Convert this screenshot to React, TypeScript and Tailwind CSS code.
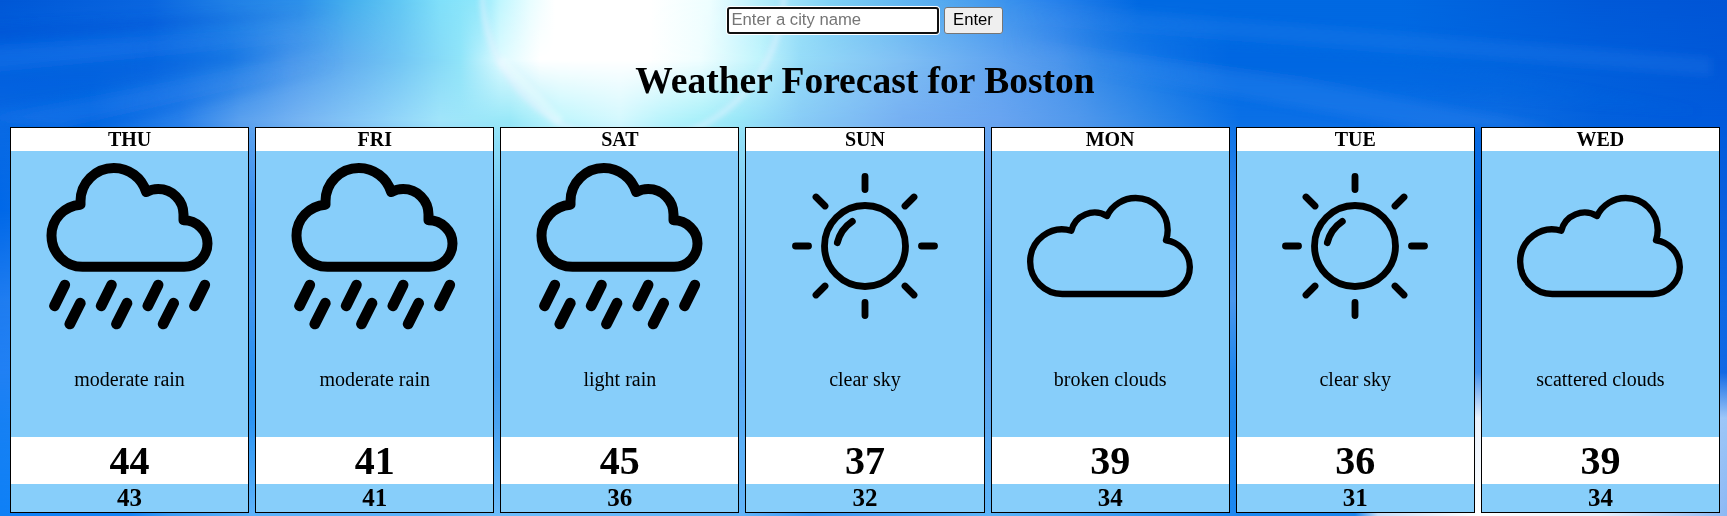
type Weather = 'rain' | 'sun' | 'cloud';

interface Day {
  name: string;
  icon: Weather;
  text: string;
  high: number;
  low: number;
}

const days: Day[] = [
  { name: 'THU', icon: 'rain', text: 'moderate rain', high: 44, low: 43 },
  { name: 'FRI', icon: 'rain', text: 'moderate rain', high: 41, low: 41 },
  { name: 'SAT', icon: 'rain', text: 'light rain', high: 45, low: 36 },
  { name: 'SUN', icon: 'sun', text: 'clear sky', high: 37, low: 32 },
  { name: 'MON', icon: 'cloud', text: 'broken clouds', high: 39, low: 34 },
  { name: 'TUE', icon: 'sun', text: 'clear sky', high: 36, low: 31 },
  { name: 'WED', icon: 'cloud', text: 'scattered clouds', high: 39, low: 34 },
];

// Horizontal colour bands of the sky; each fades into the next one below it.
const bands: { y: number; stops: [number, string][] }[] = [
  {
    y: 0,
    stops: [
      [0, '#0057d6'], [150, '#0a66e0'], [230, '#2080e6'], [300, '#2c90ea'], [350, '#45b0ee'], [400, '#62c8f4'],
      [440, '#80e0fa'], [480, '#90e8fb'], [500, '#c0f6fe'], [530, '#e8fdff'], [555, '#ffffff'], [650, '#ffffff'],
      [710, '#eefeff'], [760, '#b8f0fc'], [830, '#80d2f6'], [900, '#62b8f2'], [970, '#4aa0ee'], [1050, '#2a84ec'],
      [1100, '#1474e6'], [1140, '#0069e2'], [1400, '#0069e2'], [1600, '#0059d8'], [1727, '#0055d6'],
    ],
  },
  {
    y: 60,
    stops: [
      [0, '#0062e0'], [150, '#0768e2'], [230, '#1c7ce6'], [290, '#4a98ec'], [350, '#62b0f0'], [400, '#72c6f4'],
      [460, '#90e4f9'], [500, '#dcfaff'], [540, '#ffffff'], [650, '#ffffff'], [700, '#f0feff'], [760, '#c0f4fc'],
      [800, '#96dcf8'], [900, '#80c0f4'], [1000, '#60a4f0'], [1060, '#4c96ec'], [1100, '#3088e8'], [1160, '#1478e8'],
      [1230, '#0069e2'], [1400, '#0069e2'], [1727, '#0058d8'],
    ],
  },
  {
    y: 120,
    stops: [
      [0, '#0a6ae4'], [90, '#0268e2'], [180, '#2880ea'], [240, '#5aa0ee'], [300, '#76b4f2'], [380, '#8ccff8'],
      [440, '#a0e4fa'], [510, '#98e8f8'], [560, '#c0f6fd'], [620, '#d4f8fe'], [660, '#baf4fc'], [700, '#a8f0fa'],
      [740, '#98e6f8'], [800, '#88ccf6'], [900, '#76b0f2'], [1000, '#68a4f0'], [1080, '#5098ec'], [1150, '#3088e8'],
      [1240, '#0a70e6'], [1400, '#0a6ee6'], [1500, '#0c6ce2'], [1600, '#0260dc'], [1727, '#005adc'],
    ],
  },
  {
    y: 210,
    stops: [
      [0, '#0068e8'], [252, '#3a90ee'], [497, '#6cc4f6'], [742, '#7cc8f6'], [988, '#5aa0f0'], [1233, '#3088ec'],
      [1478, '#0066e2'], [1727, '#0860de'],
    ],
  },
  {
    y: 300,
    stops: [
      [0, '#1e7cf0'], [252, '#4296ee'], [497, '#50a4f0'], [742, '#66aef4'], [988, '#3c90ee'], [1233, '#4a98ee'],
      [1478, '#2478e8'], [1727, '#0c68e4'],
    ],
  },
  {
    y: 372,
    stops: [
      [0, '#2080f4'], [252, '#2a90f0'], [497, '#3f9aee'], [742, '#5aa8f4'], [988, '#5aa0f0'], [1233, '#2086ec'],
      [1478, '#4492ee'], [1727, '#1068e4'],
    ],
  },
  {
    y: 418,
    stops: [
      [0, '#1680f4'], [252, '#2c94f2'], [497, '#48a2f0'], [742, '#5aaef6'], [988, '#5aa8f0'], [1233, '#1a84ec'],
      [1400, '#1a84ec'], [1478, '#ecf3fd'], [1727, '#9cc6f8'],
    ],
  },
  {
    y: 510,
    stops: [
      [0, '#0f80f6'], [130, '#1484f6'], [170, '#3c9cf4'], [252, '#5cb2fa'], [430, '#5cb2fa'], [497, '#6cbcfa'],
      [742, '#62b4f8'], [810, '#3c98f4'], [988, '#5cb4f8'], [1233, '#1c88f0'], [1355, '#1a86ee'], [1378, '#c8e0fa'],
      [1478, '#ffffff'], [1600, '#e8f2fd'], [1727, '#8cb8f4'],
    ],
  },
];

function Sky() {
  return (
    <svg className="absolute inset-0 h-[516px] w-full" viewBox="0 0 1727 516" preserveAspectRatio="none" aria-hidden="true">
      <defs>
        {bands.map((band, i) => (
          <linearGradient key={band.y} id={`band${i}`} gradientUnits="userSpaceOnUse" x1="0" x2="1727" y1="0" y2="0">
            {band.stops.map(([x, color]) => (
              <stop key={x} offset={x / 1727} stopColor={color} />
            ))}
          </linearGradient>
        ))}
        {bands.slice(1).map((band, i) => (
          <linearGradient key={band.y} id={`fade${i + 1}`} gradientUnits="userSpaceOnUse" x1="0" x2="0" y1={bands[i].y} y2={band.y}>
            <stop offset="0" stopColor="#fff" stopOpacity="0" />
            <stop offset="1" stopColor="#fff" stopOpacity="1" />
          </linearGradient>
        ))}
        {bands.slice(1).map((band, i) => (
          <mask key={band.y} id={`mask${i + 1}`} maskUnits="userSpaceOnUse" x="0" y="0" width="1727" height="516">
            <rect width="1727" height="516" fill={`url(#fade${i + 1})`} />
          </mask>
        ))}
        <linearGradient id="rayFade" gradientUnits="userSpaceOnUse" x1="0" x2="1727" y1="0" y2="0">
          <stop offset="0" stopColor="#fff" />
          <stop offset=".07" stopColor="#fff" />
          <stop offset=".2" stopColor="#fff" stopOpacity="0" />
          <stop offset=".58" stopColor="#fff" stopOpacity="0" />
          <stop offset=".7" stopColor="#fff" />
          <stop offset="1" stopColor="#fff" />
        </linearGradient>
        <mask id="rayMask" maskUnits="userSpaceOnUse" x="0" y="0" width="1727" height="516">
          <rect width="1727" height="516" fill="url(#rayFade)" />
        </mask>
        <filter id="soft" x="-20%" y="-50%" width="140%" height="200%">
          <feGaussianBlur stdDeviation="4" />
        </filter>
        <filter id="halo" x="-20%" y="-20%" width="140%" height="140%">
          <feGaussianBlur stdDeviation="2.5" />
        </filter>
      </defs>
      {bands.map((band, i) => (
        <rect
          key={band.y}
          width="1727"
          height="516"
          fill={`url(#band${i})`}
          mask={i ? `url(#mask${i})` : undefined}
        />
      ))}
      <g mask="url(#rayMask)">
        <g filter="url(#soft)">
          <path d="M-10 26 L360 8 L360 14 L-10 40Z" fill="#0050d0" opacity=".35" />
          <path d="M-10 48 L360 26 L360 34 L-10 70Z" fill="#2f80ee" opacity=".25" />
          <path d="M-10 72 L360 36 L360 44 L-10 108Z" fill="#0058dc" opacity=".3" />
          <path d="M-10 118 L360 48 L360 58 L60 126Z" fill="#2f80ee" opacity=".25" />
          <path d="M60 126 L360 60 L360 66 L110 128Z" fill="#0060e0" opacity=".3" />
          <path d="M980 0 L1711 58 L1711 76 L980 18Z" fill="#3a8cf0" opacity=".2" />
          <path d="M980 20 L1400 58 L1700 112 L1300 80 L980 36Z" fill="#0064e0" opacity=".3" />
          <path d="M980 36 L1300 80 L1560 128 L1420 128 L980 52Z" fill="#3a8cf0" opacity=".26" />
        </g>
      </g>
      <g fill="none" filter="url(#halo)">
        <circle cx="633" cy="-9" r="151" stroke="#e4f2ff" strokeWidth="6" opacity=".5" />
        <path d="M500 60 L560 122" stroke="#ffffff" strokeWidth="10" opacity=".3" />
      </g>
    </svg>
  );
}

function RainIcon() {
  return (
    <svg className="h-[200px] w-[200px]" viewBox="88.5 93 600 600" fill="none" stroke="#000" strokeWidth="30" strokeLinecap="round" strokeLinejoin="round">
      <path d="M246 440.5A93 93.5 0 0 1 153 347A93 93 0 0 1 240 254V244A100 100 0 0 1 340 144A101 101 0 0 1 437 216A76 76 0 0 1 473 207A76 76 0 0 1 549 283V301A72 70 0 0 1 621 370.5A70 70 0 0 1 551 440.5Z" />
      {[0, 140, 280, 420].map((x) => (
        <path key={x} strokeWidth="32" d={`M${193 + x} 495L${162 + x} 557.5`} />
      ))}
      {[0, 140, 280].map((x) => (
        <path key={x} strokeWidth="32" d={`M${239.5 + x} 549.5L${208 + x} 612`} />
      ))}
    </svg>
  );
}

function SunIcon() {
  return (
    <svg className="h-[200px] w-[200px]" viewBox="75 93 600 600" fill="none" stroke="#000" strokeWidth="20.5" strokeLinecap="round">
      <circle cx="375" cy="378" r="121.5" />
      <path d="M292 368A108 108 0 0 1 337 304" />
      <path d="M375 169.5V208.5M375 547.5V586.5M166.5 378H205.5M544.5 378H583.5" />
      <path d="M228 231L255 258M522 231L495 258M228 525L255 498M522 525L495 498" />
    </svg>
  );
}

function CloudIcon() {
  return (
    <svg className="h-[200px] w-[200px]" viewBox="75 93 600 600" fill="none" stroke="#000" strokeWidth="19" strokeLinecap="round" strokeLinejoin="round">
      <path d="M232 522A96.5 97 0 0 1 135.5 425A96.5 97 0 0 1 259 332A72 72 0 0 1 366 288A96 96 0 0 1 452 234A96 96 0 0 1 548 330A96 96 0 0 1 543 361A81 81 0 0 1 614.5 441A80.5 81 0 0 1 534 522Z" />
    </svg>
  );
}

const icons = { rain: RainIcon, sun: SunIcon, cloud: CloudIcon };

function DayCard({ day }: { day: Day }) {
  const Icon = icons[day.icon];
  return (
    <section className="flex min-w-0 flex-1 flex-col items-stretch border border-black bg-[#87cefa] text-center">
      <h3 className="h-[23px] bg-white text-[20px] leading-[23px] font-bold">{day.name}</h3>
      <div className="flex h-[286px] flex-col items-center">
        <Icon />
        <p className="mt-[17px] text-[20px] leading-[23px]">{day.text}</p>
      </div>
      <div className="h-[47px] bg-white text-[40px] leading-[47px] font-bold">{day.high}</div>
      <div className="h-[28px] text-[25px] leading-[28px] font-bold">{day.low}</div>
    </section>
  );
}

export default function App() {
  return (
    <main className="relative h-[516px] overflow-hidden font-['Liberation_Serif',serif] text-black">
      <Sky />
      <div className="relative flex flex-col">
        <form className="flex h-[34px] justify-center gap-[5px] pt-[7px] pl-[2px] font-['Liberation_Sans',sans-serif] text-[16.67px]">
          <input
            className="h-[27px] w-[212px] rounded-[3px] border-2 border-[#101010] bg-white px-[3px] pb-[2px] shadow-[0_0_0_1px_#fff] outline-none placeholder:text-[#757575]"
            placeholder="Enter a city name"
          />
          <button type="button" className="h-[27px] w-[59px] rounded-[3px] border border-[#767676] bg-[#efefef] leading-none">
            Enter
          </button>
        </form>
        <h1 className="mt-[25px] h-[44px] pl-[3px] text-center text-[37.5px] leading-[44px] font-bold">Weather Forecast for Boston</h1>
        <div className="mt-[24px] flex gap-[6px] pr-[7px] pl-[10px]">
          {days.map((day) => (
            <DayCard key={day.name} day={day} />
          ))}
        </div>
      </div>
    </main>
  );
}
